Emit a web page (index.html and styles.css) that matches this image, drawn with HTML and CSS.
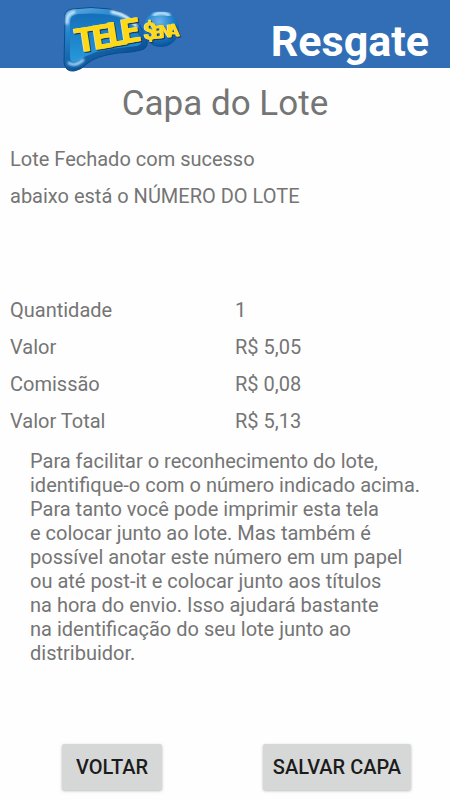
FILE: index.html
```html
<!DOCTYPE html>
<html lang="pt-BR">
<head>
<meta charset="utf-8">
<meta name="viewport" content="width=device-width, initial-scale=1">
<title>Resgate</title>
<link rel="stylesheet" href="styles.css">
</head>
<body>
<header class="bar">
  <svg class="logo" viewBox="0 0 130 68" role="img" aria-label="Tele Sena">
    <defs>
      <linearGradient id="rim" x1="0" y1="0" x2="0.5" y2="1">
        <stop offset="0" stop-color="#64ade4"/>
        <stop offset="0.35" stop-color="#2484cb"/>
        <stop offset="1" stop-color="#07488c"/>
      </linearGradient>
      <linearGradient id="face" x1="0" y1="0" x2="0" y2="1">
        <stop offset="0" stop-color="#146fb9"/>
        <stop offset="1" stop-color="#2799da"/>
      </linearGradient>
      <radialGradient id="ball" cx="0.45" cy="0.3" r="0.7">
        <stop offset="0" stop-color="#6ab4e9"/>
        <stop offset="0.5" stop-color="#2484cf"/>
        <stop offset="1" stop-color="#08529c"/>
      </radialGradient>
      <filter id="soft" x="-20%" y="-50%" width="140%" height="200%"><feGaussianBlur stdDeviation="1"/></filter>
    </defs>
    <path d="M5 13Q3 5 12 3Q31 0 50 3Q75 7 85 28Q90 39 84 43Q77 46 58 47Q36 50 28 57Q21 64 14 65Q5 66 4 56Z" fill="url(#rim)" stroke="#0d4b8c" stroke-width="1"/>
    <path d="M10 15Q10 9 18 8Q43 6 58 11Q73 17 80 31Q84 38 77 40Q53 42 36 46Q25 50 17 55Q10 58 10 50Z" fill="url(#face)"/>
    <g fill="none" stroke-linecap="round" filter="url(#soft)">
      <path d="M7 17Q6 8 14 6" stroke="#c9e9ff" stroke-width="3"/>
      <path d="M52 6Q68 9 76 20" stroke="#e4f5ff" stroke-width="3"/>
      <path d="M9 57Q15 61 23 54" stroke="#9bd4f8" stroke-width="3"/>
    </g>
    <circle cx="101" cy="23" r="18" fill="url(#ball)"/>
    <path d="M94 9Q101 5 109 9" fill="none" stroke="#c9eaff" stroke-width="3" stroke-linecap="round" filter="url(#soft)"/>
    <g class="letters">
      <text class="tele" x="17 35 50 63" y="47 44 41 38" rotate="-9">TELE</text>
      <text class="sena" y="31" rotate="-4"><tspan class="cash" x="84" y="34">$</tspan><tspan x="93 100 108" y="33 32 31">ENA</tspan></text>
    </g>
  </svg>
  <span class="brand">Resgate</span>
</header>
<main>
  <h1>Capa do Lote</h1>
  <div class="notice">
    <p>Lote Fechado com sucesso</p>
    <p>abaixo está o NÚMERO DO LOTE</p>
  </div>
  <table class="summary">
    <tbody>
      <tr><th scope="row">Quantidade</th><td>1</td></tr>
      <tr><th scope="row">Valor</th><td>R$ 5,05</td></tr>
      <tr><th scope="row">Comissão</th><td>R$ 0,08</td></tr>
      <tr><th scope="row">Valor Total</th><td>R$ 5,13</td></tr>
    </tbody>
  </table>
  <p class="help">Para facilitar o reconhecimento do lote,<br>identifique-o com o número indicado acima.<br>Para tanto você pode imprimir esta tela<br>e colocar junto ao lote. Mas também é<br>possível anotar este número em um papel<br>ou até post-it e colocar junto aos títulos<br>na hora do envio. Isso ajudará bastante<br>na identificação do seu lote junto ao<br>distribuidor.</p>
</main>
<footer class="actions">
  <button type="button">VOLTAR</button>
  <button type="button">SALVAR CAPA</button>
</footer>
</body>
</html>
```

FILE: styles.css
```css
* {
  box-sizing: border-box;
}

body {
  display: flex;
  flex-direction: column;
  min-height: 100vh;
  margin: 0;
  background: #fefefe;
  color: #757575;
  font: 20px/24px Roboto, sans-serif;
}

h1,
p {
  margin: 0;
}

.bar {
  display: flex;
  align-items: flex-start;
  justify-content: space-between;
  height: 68px;
  padding: 6px 21px 0 60px;
  background: #316eb5;
}

.logo {
  flex: none;
  width: 130px;
  height: 68px;
}

.letters {
  fill: #ffd816;
  font-family: Roboto, sans-serif;
  font-weight: 900;
  filter: drop-shadow(-1px 0 0 #e9e6b0) drop-shadow(1px 1px 0 #15395c);
}

.tele {
  font-size: 34px;
}

.sena {
  font-size: 18px;
}

.cash {
  font-size: 24px;
}

.brand {
  padding-top: 11px;
  color: #fff;
  font-size: 43px;
  font-weight: 700;
  line-height: 48px;
}

h1 {
  padding-top: 14px;
  font-size: 35px;
  font-weight: 400;
  line-height: 44px;
  text-align: center;
}

.notice {
  display: grid;
  gap: 13px;
  padding: 21px 10px 0;
}

.summary {
  width: 100%;
  margin-top: 83px;
  border-collapse: collapse;
  table-layout: fixed;
}

.summary th,
.summary td {
  height: 37px;
  padding: 0 10px;
  font-weight: 400;
  text-align: left;
}

.summary th {
  width: 50%;
}

.help {
  padding: 10px 20px 0 30px;
}

.actions {
  display: flex;
  justify-content: space-between;
  margin-top: auto;
  padding: 24px 39px 10px 62px;
}

button {
  height: 46px;
  padding: 0 10px;
  min-width: 100px;
  border: 0;
  border-radius: 2px;
  background: #d6d8d7;
  box-shadow: 0 1px 3px #0004;
  color: #1c1c1c;
  font: 500 20px/24px Roboto, sans-serif;
}
```
